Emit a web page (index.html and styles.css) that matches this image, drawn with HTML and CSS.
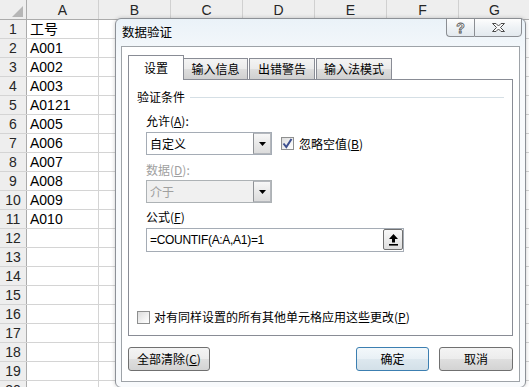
FILE: index.html
```html
<!DOCTYPE html>
<html lang="zh-CN">

<head>
    <meta charset="UTF-8">
    <meta name="viewport" content="width=device-width, initial-scale=1.0">
    <title>数据验证</title>
    <link rel="stylesheet" href="styles.css">
</head>

<body>
    <div class="sheet">
        <div class="sheet-head">
            <div class="corner"><span class="corner-mark"></span></div>
            <div class="col">A</div>
            <div class="col">B</div>
            <div class="col">C</div>
            <div class="col">D</div>
            <div class="col">E</div>
            <div class="col">F</div>
            <div class="col">G</div>
        </div>
        <div class="row"><div class="rn">1</div><div class="cell">工号</div><div class="cell"></div></div>
        <div class="row"><div class="rn">2</div><div class="cell">A001</div><div class="cell"></div></div>
        <div class="row"><div class="rn">3</div><div class="cell">A002</div><div class="cell"></div></div>
        <div class="row"><div class="rn">4</div><div class="cell">A003</div><div class="cell"></div></div>
        <div class="row"><div class="rn">5</div><div class="cell">A0121</div><div class="cell"></div></div>
        <div class="row"><div class="rn">6</div><div class="cell">A005</div><div class="cell"></div></div>
        <div class="row"><div class="rn">7</div><div class="cell">A006</div><div class="cell"></div></div>
        <div class="row"><div class="rn">8</div><div class="cell">A007</div><div class="cell"></div></div>
        <div class="row"><div class="rn">9</div><div class="cell">A008</div><div class="cell"></div></div>
        <div class="row"><div class="rn">10</div><div class="cell">A009</div><div class="cell"></div></div>
        <div class="row"><div class="rn">11</div><div class="cell">A010</div><div class="cell"></div></div>
        <div class="row"><div class="rn">12</div><div class="cell"></div><div class="cell"></div></div>
        <div class="row"><div class="rn">13</div><div class="cell"></div><div class="cell"></div></div>
        <div class="row"><div class="rn">14</div><div class="cell"></div><div class="cell"></div></div>
        <div class="row"><div class="rn">15</div><div class="cell"></div><div class="cell"></div></div>
        <div class="row"><div class="rn">16</div><div class="cell"></div><div class="cell"></div></div>
        <div class="row"><div class="rn">17</div><div class="cell"></div><div class="cell"></div></div>
        <div class="row"><div class="rn">18</div><div class="cell"></div><div class="cell"></div></div>
        <div class="row"><div class="rn">19</div><div class="cell"></div><div class="cell"></div></div>
        <div class="row"><div class="rn">20</div><div class="cell"></div><div class="cell"></div></div>
    </div>

    <div class="dialog">
        <div class="titlebar">
            <span class="title">数据验证</span>
            <div class="caption">
                <div class="cap cap-help"><span class="cap-q">?</span></div>
                <div class="cap cap-close">
                    <svg width="15" height="11" viewBox="0 0 15 11"><path d="M1.5 1.5H5L7.5 4 10 1.5h3.5L9.5 5.5l4 4H10L7.5 7 5 9.5H1.5l4-4z" fill="#fafafa" stroke="#4a4a4a" stroke-width="1" stroke-linejoin="round"/></svg>
                </div>
            </div>
        </div>
        <div class="client">
            <div class="tabs">
                <div class="tab active">设置</div>
                <div class="tab tab-2">输入信息</div>
                <div class="tab tab-3">出错警告</div>
                <div class="tab tab-4">输入法模式</div>
            </div>
            <div class="panel">
                <div class="group">验证条件</div>
                <div class="label label-allow">允许(<u>A</u>):</div>
                <div class="select-row">
                    <div class="select">
                        <span class="select-value">自定义</span>
                        <span class="select-btn"><svg width="7" height="4" viewBox="0 0 7 4"><path d="M0 0h7L3.5 4z" fill="#000"/></svg></span>
                    </div>
                    <span class="check checked"><svg width="11" height="11" viewBox="0 0 11 11"><path d="M1.5 5.5l2.8 3.5L9.5 1" fill="none" stroke="#3d4f8f" stroke-width="2"/></svg></span>
                    <span class="check-label">忽略空值(<u>B</u>)</span>
                </div>
                <div class="label label-data disabled">数据(<u>D</u>):</div>
                <div class="select select-disabled">
                    <span class="select-value">介于</span>
                    <span class="select-btn"><svg width="7" height="4" viewBox="0 0 7 4"><path d="M0 0h7L3.5 4z" fill="#000"/></svg></span>
                </div>
                <div class="label label-formula">公式(<u>F</u>)</div>
                <div class="formula">
                    <span class="formula-text">=COUNTIF(A:A,A1)=1</span>
                    <span class="ref-btn"><svg width="9" height="12" viewBox="0 0 9 12"><path d="M4.5 0L9 5H6v3.5H3V5H0z" fill="#000"/><rect x="0" y="10" width="9" height="1.6" fill="#000"/></svg></span>
                </div>
                <div class="apply-row">
                    <span class="check"></span>
                    <span class="check-label">对有同样设置的所有其他单元格应用这些更改(<u>P</u>)</span>
                </div>
            </div>
            <div class="actions">
                <div class="btn btn-clear">全部清除(<u>C</u>)</div>
                <div class="btn btn-ok">确定</div>
                <div class="btn btn-cancel">取消</div>
            </div>
        </div>
    </div>
</body>

</html>
```

FILE: styles.css
```css
* {
    box-sizing: border-box;
}
body {
    margin: 0;
    width: 529px;
    height: 387px;
    overflow: hidden;
    position: relative;
    background: #fff;
    font-family: "Liberation Sans", "Noto Sans CJK SC", sans-serif;
}

/* spreadsheet behind the dialog */
.sheet-head {
    display: flex;
    height: 20px;
    background: #eeeeee;
    border-bottom: 1px solid #ababab;
}
.corner {
    width: 27px;
    flex: none;
    border-right: 1px solid #ababab;
    display: flex;
    align-items: flex-end;
    justify-content: flex-end;
    padding: 0 3px 2px 0;
}
.corner-mark {
    width: 0;
    height: 0;
    border-left: 11px solid transparent;
    border-bottom: 11px solid #b6b6b6;
}
.col {
    width: 72px;
    flex: none;
    border-right: 1px solid #d0d0d0;
    text-align: center;
    font-size: 14px;
    line-height: 20px;
    color: #262626;
}
.row {
    display: flex;
    height: 19px;
    border-bottom: 1px solid #d4d4d4;
}
.rn {
    width: 27px;
    flex: none;
    background: #eeeeee;
    border-right: 1px solid #ababab;
    text-align: center;
    font-size: 14px;
    line-height: 19px;
    color: #262626;
}
.cell {
    width: 72px;
    flex: none;
    border-right: 1px solid #d4d4d4;
    font-size: 14px;
    line-height: 19px;
    padding-left: 3px;
    color: #000;
}

/* dialog window */
.dialog {
    position: absolute;
    left: 115px;
    top: 18px;
    width: 411px;
    height: 370px;
    border: 1px solid #8d9197;
    border-radius: 6px;
    background: linear-gradient(#eaf2f8, #f8fafc 45px);
    padding: 0 5px 5px;
    display: flex;
    flex-direction: column;
    font-family: "Noto Sans CJK SC", sans-serif;
    font-size: 12px;
    color: #000;
    box-shadow: 0 0 4px rgba(0, 0, 0, 0.2);
}
.titlebar {
    height: 27px;
    flex: none;
    display: flex;
    align-items: center;
    padding: 0 0 1px 1px;
    position: relative;
}
.title {
    font-size: 12.5px;
    line-height: 16px;
}
.caption {
    position: absolute;
    top: -1px;
    right: -2px;
    display: flex;
}
.cap {
    height: 19px;
    border: 1px solid #8b8e93;
    background: linear-gradient(#fdfdfd, #eef2f5 50%, #e3e9ee);
    display: flex;
    align-items: center;
    justify-content: center;
}
.cap-help {
    width: 28px;
    border-right: none;
    border-radius: 0 0 0 4px;
}
.cap-close {
    width: 48px;
    border-radius: 0 0 4px 0;
}
.cap-q {
    font-family: "Liberation Sans", sans-serif;
    font-weight: bold;
    font-size: 14px;
    line-height: 16px;
    color: #fafafa;
    -webkit-text-stroke: 0.8px #555;
}

.client {
    flex: 1;
    border: 1px solid #9ea3a8;
    background: #fff;
    padding: 8px 6px 10px;
    display: flex;
    flex-direction: column;
}

/* tabs */
.tabs {
    display: flex;
    align-items: flex-end;
    height: 24px;
    flex: none;
}
.tab {
    height: 21px;
    border: 1px solid #898c95;
    border-bottom: none;
    background: linear-gradient(#f4f4f4, #ebebeb 50%, #dedede 50%, #d0d0d0);
    text-align: center;
    line-height: 19px;
}
.tab.active {
    width: 56px;
    height: 25px;
    margin-bottom: -1px;
    background: #fff;
    line-height: 23px;
    position: relative;
    z-index: 1;
}
.tab-2 {
    width: 65px;
    margin-left: -1px;
}
.tab-3 {
    width: 66px;
    margin-left: 1px;
}
.tab-4 {
    width: 76px;
    margin-left: 1px;
}

.panel {
    height: 257px;
    flex: none;
    border: 1px solid #898c95;
    background: #fff;
    padding: 9px 8px 10px;
    display: flex;
    flex-direction: column;
}
.group {
    display: flex;
    align-items: center;
    line-height: 16px;
}
.group::after {
    content: "";
    flex: 1;
    height: 1px;
    background: #d5dfe5;
    margin-left: 5px;
}
.label {
    margin-left: 9px;
    line-height: 16px;
}
.label-allow {
    margin-top: 8px;
}
.label-data {
    margin-top: 7px;
}
.label-formula {
    margin-top: 6px;
}
.disabled {
    color: #a0a0a0;
}

.select-row {
    display: flex;
    align-items: center;
    margin: 3px 0 0 9px;
}
.select {
    width: 126px;
    height: 23px;
    border: 1px solid #a5acb5;
    background: #fff;
    display: flex;
    align-items: stretch;
}
.select-value {
    flex: 1;
    padding-left: 3px;
    line-height: 21px;
}
.select-btn {
    width: 18px;
    border: 1px solid #b4b7bc;
    border-left-color: #8e9195;
    background: linear-gradient(#f7f7f7, #e9e9e9 50%, #dcdcdc);
    display: flex;
    align-items: center;
    justify-content: center;
}
.select-disabled {
    margin: 2px 0 0 9px;
    background: #f0f0f0;
    border-color: #adb2b5;
}
.select-disabled .select-value {
    color: #a0a0a0;
}

.check {
    width: 13px;
    height: 13px;
    flex: none;
    border: 1px solid #8e8f8f;
    background: linear-gradient(135deg, #dcdcdc, #f6f6f6 70%, #fff);
    display: flex;
    align-items: center;
    justify-content: center;
}
.select-row .check {
    margin-left: 9px;
}
.check-label {
    margin-left: 5px;
    line-height: 16px;
}

.formula {
    width: 258px;
    height: 24px;
    margin: 3px 0 0 9px;
    border: 1px solid #a5acb5;
    display: flex;
    align-items: flex-start;
}
.formula-text {
    font-family: "Liberation Sans", sans-serif;
    font-size: 12px;
    line-height: 22px;
    padding-left: 3px;
    letter-spacing: -0.3px;
}
.ref-btn {
    width: 20px;
    height: 21px;
    margin-left: auto;
    border: 1px solid #707070;
    border-radius: 2px;
    background: linear-gradient(#f8f8f8, #ececec 50%, #dedede);
    display: flex;
    align-items: center;
    justify-content: center;
}

.apply-row {
    margin-top: auto;
    display: flex;
    align-items: center;
}
.apply-row .check-label {
    margin-left: 4px;
}

/* bottom buttons */
.actions {
    display: flex;
    margin-top: 11px;
    gap: 10px;
}
.btn {
    height: 24px;
    border: 1px solid #707070;
    border-radius: 3px;
    background: linear-gradient(#f4f4f4, #ececec 50%, #dfdfdf 50%, #d3d3d3);
    display: flex;
    align-items: center;
    justify-content: center;
    line-height: 16px;
}
.btn-clear {
    width: 82px;
    margin-right: auto;
}
.btn-ok {
    width: 73px;
    border-color: #3c7fb1;
    background: linear-gradient(#f3f8fb, #e8f0f5 50%, #dde8ef 50%, #d3e0e8);
}
.btn-cancel {
    width: 74px;
}
```
